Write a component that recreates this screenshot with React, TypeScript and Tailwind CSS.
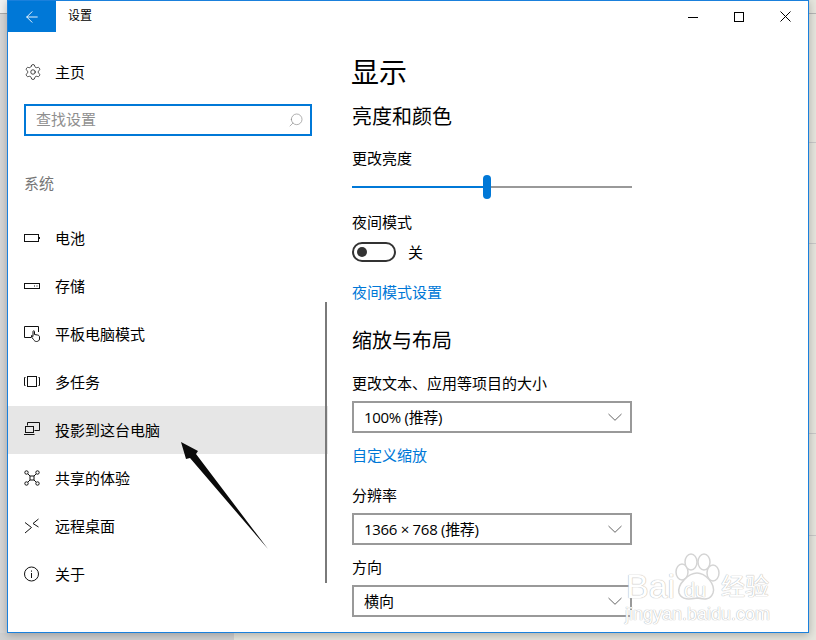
import { ReactNode } from 'react';
import { ArrowLeft, Settings, Search } from 'lucide-react';

const Battery = () => (
  <svg width="16" height="16" viewBox="0 0 16 16" fill="none" stroke="#111">
    <rect x="0.5" y="4.5" width="14" height="7" />
    <path d="M15.5 7v2" />
  </svg>
);

const Storage = () => (
  <svg width="16" height="16" viewBox="0 0 16 16" fill="none" stroke="#111">
    <rect x="0.5" y="5.5" width="15" height="5" />
    <path d="M10 8h1M12.5 8h1" />
  </svg>
);

const TabletMode = () => (
  <svg width="16" height="16" viewBox="0 0 16 16" fill="none" stroke="#111">
    <path d="M7 11.5H0.5V0.5H14.5V6" />
    <path d="M9.5 13.5L7.5 11V9.5L9 10.5V5.5C9 4.5 10.5 4.5 10.5 5.5V8.5L13.5 9C15 9.3 15.5 10 15.5 11V13C15.5 14.5 14 15.5 12.5 15.5C11 15.5 10.3 14.7 9.5 13.5Z" fill="#fff" />
  </svg>
);

const Multitask = () => (
  <svg width="16" height="16" viewBox="0 0 16 16" fill="none" stroke="#111">
    <rect x="3.5" y="2.5" width="9" height="10" />
    <path d="M1.5 3.5H0.5V11.5H1.5M14.5 3.5H15.5V11.5H14.5" />
  </svg>
);

const ProjectTo = () => (
  <svg width="16" height="16" viewBox="0 0 16 16" fill="none" stroke="#111">
    <path d="M3.5 3.5V0.5H15.5V8.5H10.5" />
    <rect x="1.5" y="4.5" width="8" height="6" />
    <path d="M0 12.5H10.5" />
  </svg>
);

const Shared = () => (
  <svg width="16" height="16" viewBox="0 0 16 16" fill="none" stroke="#111">
    <circle cx="2.5" cy="2.5" r="1.7" />
    <circle cx="13.5" cy="2.5" r="1.7" />
    <circle cx="2.5" cy="13.5" r="1.7" />
    <circle cx="13.5" cy="13.5" r="1.7" />
    <rect x="6" y="6" width="4" height="4" />
    <path d="M4 4L6 6M12 4L10 6M4 12L6 10M12 12L10 10" />
  </svg>
);

const Remote = () => (
  <svg width="16" height="16" viewBox="0 0 16 16" fill="none" stroke="#111">
    <path d="M1 4.5L7.5 9.5L1 15M14.5 1L9 5.5L14.5 9" />
  </svg>
);

const About = () => (
  <svg width="16" height="16" viewBox="0 0 16 16" fill="none" stroke="#111">
    <circle cx="7.5" cy="8" r="7" />
    <path d="M7.5 7v5M7.5 4.5v1.2" />
  </svg>
);

const navItems: { label: string; icon: ReactNode; active?: boolean }[] = [
  { label: '电池', icon: <Battery /> },
  { label: '存储', icon: <Storage /> },
  { label: '平板电脑模式', icon: <TabletMode /> },
  { label: '多任务', icon: <Multitask /> },
  { label: '投影到这台电脑', icon: <ProjectTo />, active: true },
  { label: '共享的体验', icon: <Shared /> },
  { label: '远程桌面', icon: <Remote /> },
  { label: '关于', icon: <About /> },
];

function NavRow({ label, icon, active }: { label: string; icon: ReactNode; active?: boolean }) {
  return (
    <div className={active ? 'flex h-12 items-center gap-[15px] bg-[#e6e6e6] pl-4' : 'flex h-12 items-center gap-[15px] pl-4'}>
      <span className="flex h-4 w-4 items-center justify-center">{icon}</span>
      <span className="text-[15px] text-black">{label}</span>
    </div>
  );
}

function Dropdown({ value, className }: { value: string; className: string }) {
  return (
    <div className={`flex h-8 w-[280px] items-center justify-between border-2 border-[#999] pl-[10px] pr-[8px] text-[15px] text-black ${className}`}>
      <span>{value}</span>
      <svg width="14" height="8" viewBox="0 0 14 8" fill="none" stroke="#666">
        <path d="M0.5 1L7 7.3L13.5 1" />
      </svg>
    </div>
  );
}

export default function App() {
  return (
    <div className="relative h-[640px] w-[816px] overflow-hidden bg-[#e5e5dd] pl-[7px] font-['Open_Sans','Noto_Sans_CJK_SC',sans-serif]">
      {/* desktop behind the window */}
      <div className="absolute left-0 top-[13px] h-[627px] w-[7px] border-t border-[#aaa] bg-[#d6d6d6]" />
      <div className="absolute left-0 top-0 h-[13px] w-[7px] bg-[#f1f1f1]" />
      <div className="absolute bottom-0 left-0 h-[7px] w-[234px] bg-[#d0d0d0]" />
      <div className="absolute left-[809px] top-[13px] h-px w-[7px] bg-[#b5b5b5]" />
      <div className="absolute left-[809px] top-[142px] h-px w-[7px] bg-[#c8c8c8]" />
      <div className="absolute left-[809px] top-[243px] h-px w-[7px] bg-[#c8c8c8]" />
      <div className="absolute left-[809px] top-[433px] h-px w-[7px] bg-[#c8c8c8]" />
      <div className="absolute left-[809px] top-[535px] h-px w-[7px] bg-[#c8c8c8]" />

      <div className="relative h-[633px] w-[802px] overflow-hidden border border-[#1a80dc] bg-white shadow-[0_2px_8px_rgba(0,0,0,0.25)]">
        <div className="flex h-[31px] items-center">
          <div className="flex h-[31px] w-12 items-center justify-center bg-[#0078d7] text-white">
            <ArrowLeft size={18} strokeWidth={1.2} />
          </div>
          <span className="ml-3 pb-[2px] text-[12px] text-black">设置</span>
          <div className="ml-auto flex h-[31px] items-center">
            <div className="flex h-full w-[46px] items-center justify-center">
              <svg width="10" height="10" viewBox="0 0 10 10" fill="none" stroke="#000">
                <path d="M0 5.5H10" />
              </svg>
            </div>
            <div className="flex h-full w-[46px] items-center justify-center">
              <svg width="10" height="10" viewBox="0 0 10 10" fill="none" stroke="#000">
                <rect x="0.5" y="0.5" width="9" height="9" />
              </svg>
            </div>
            <div className="flex h-full w-[46px] items-center justify-center">
              <svg width="11" height="11" viewBox="0 0 11 11" fill="none" stroke="#000">
                <path d="M0.5 0.5L10.5 10.5M10.5 0.5L0.5 10.5" />
              </svg>
            </div>
          </div>
        </div>

        <div className="flex">
          <div className="relative w-[320px]">
            <div className="mt-4 flex h-12 items-center gap-[13px] pl-4">
              <Settings size={18} strokeWidth={1} className="text-[#111]" />
              <span className="text-[15px] text-black">主页</span>
            </div>
            <div className="ml-4 mt-2 flex h-8 w-[288px] items-center justify-between border-2 border-[#0078d7] pl-[10px] pr-[6px]">
              <span className="pb-[2px] text-[15px] text-[#8f8f8f]">查找设置</span>
              <Search size={16} strokeWidth={1} className="-scale-x-100 text-[#8a8a8a]" />
            </div>
            <div className="ml-4 mt-[38px] flex h-5 items-center pb-[2px] text-[15px] text-[#767676]">系统</div>
            <div className="mt-5">
              {navItems.map((item) => (
                <NavRow key={item.label} {...item} />
              ))}
            </div>
            {/* scrollbar sits over the rows */}
            <div className="absolute left-[317px] top-[270px] h-[281px] w-[2px] bg-[#7a7a7a]" />
          </div>

          <div className="pl-6 text-black">
            <div className="mt-5 -ml-px flex h-10 items-center text-[28px]">显示</div>
            <div className="mt-[10px] flex h-7 items-center pt-[2px] text-[20px]">亮度和颜色</div>
            <div className="mt-[18px] flex h-5 items-center text-[15px]">更改亮度</div>
            <div className="mt-[7px] flex h-6 w-[280px] items-center">
              <div className="h-[2px] w-[131px] bg-[#0078d7]" />
              <div className="h-6 w-2 rounded-full bg-[#0078d7]" />
              <div className="h-[2px] flex-1 bg-[#999]" />
            </div>
            <div className="mt-[13px] flex h-5 items-center text-[15px]">夜间模式</div>
            <div className="mt-[10px] flex h-5 items-center gap-3">
              <div className="flex h-5 w-11 items-center rounded-full border-2 border-[#333] pl-[3px]">
                <div className="h-[10px] w-[10px] rounded-full bg-[#333]" />
              </div>
              <span className="text-[15px]">关</span>
            </div>
            <div className="mt-5 flex h-5 items-center text-[15px] text-[#0078d7]">夜间模式设置</div>
            <div className="mt-6 flex h-7 items-center pt-[2px] text-[20px]">缩放与布局</div>
            <div className="mt-[19px] flex h-5 items-center text-[15px]">更改文本、应用等项目的大小</div>
            <Dropdown value="100% (推荐)" className="mt-2 tracking-[-0.3px]" />
            <div className="mt-3 flex h-5 items-center text-[15px] text-[#0078d7]">自定义缩放</div>
            <div className="mt-5 flex h-5 items-center text-[15px]">分辨率</div>
            <Dropdown value="1366 × 768 (推荐)" className="mt-2 tracking-[-0.3px]" />
            <div className="mt-3 flex h-5 items-center text-[15px]">方向</div>
            <Dropdown value="横向" className="mt-2" />
          </div>
        </div>
      </div>

      {/* annotation arrow drawn on the screenshot */}
      <svg className="absolute left-0 top-0" width="816" height="640" viewBox="0 0 816 640">
        <polygon points="181,442 198,451 196,454 268,549 190,458 186,459" fill="#0a0a0a" />
      </svg>

      {/* baidu watermark */}
      <div className="absolute left-[625px] top-[553px] h-[72px] w-[150px] font-['Liberation_Sans',sans-serif] text-white [text-shadow:0_0_1px_#b5b5b5,0_0_1px_#b5b5b5]">
        <svg className="absolute left-[46px] top-0" width="50" height="48" viewBox="0 0 50 48" fill="#fff" stroke="#d4d4d4" strokeWidth="1.5">
          <ellipse cx="11" cy="19" rx="6" ry="8" />
          <ellipse cx="20" cy="9" rx="6" ry="8" />
          <ellipse cx="33" cy="9" rx="6" ry="8" />
          <ellipse cx="42" cy="20" rx="6" ry="8" />
          <path d="M26 20C34 20 45 31 42 40C39 48 32 46 26 45C20 46 11 48 8 40C6 31 18 20 26 20Z" />
        </svg>
        <span className="absolute left-[1px] top-[18px] text-[34px] leading-[30px]">Bai</span>
        <span className="absolute left-[59px] top-[26px] text-[20px] leading-[22px]">du</span>
        <span className="absolute left-[96px] top-[18px] font-['Noto_Sans_CJK_SC',sans-serif] text-[24px] leading-[28px]">经验</span>
        <span className="absolute left-0 top-[50px] text-[18px] leading-[22px]">jingyan.baidu.com</span>
      </div>
    </div>
  );
}
